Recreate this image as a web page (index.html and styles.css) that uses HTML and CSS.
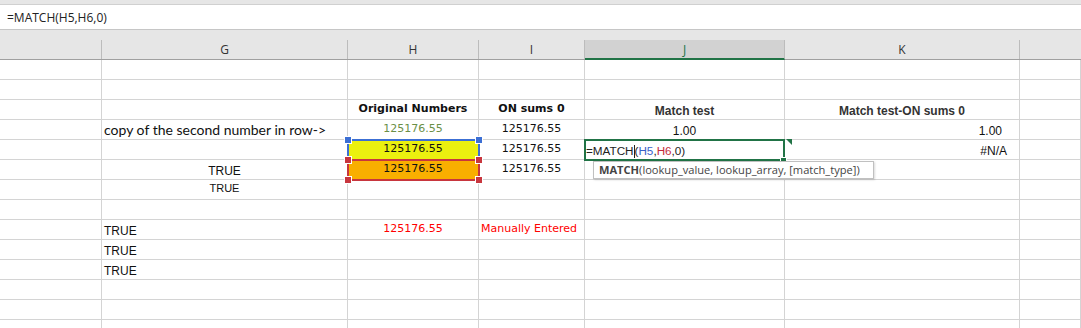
FILE: index.html
```html
<!DOCTYPE html>
<html>
<head>
<meta charset="utf-8">
<link rel="stylesheet" href="styles.css">
</head>
<body>
<div class="topstrip"></div>
<div class="fbar"><span class="ftext">=MATCH(H5,H6,0)</span></div>
<div class="hdr">
  <div class="hc"></div>
  <div class="hc">G</div>
  <div class="hc">H</div>
  <div class="hc">I</div>
  <div class="hc sel">J</div>
  <div class="hc">K</div>
  <div class="hc last"></div>
</div>
<div class="body">
  <div class="grid">
    <!-- row 1 -->
    <div class="c"></div><div class="c"></div><div class="c"></div><div class="c"></div><div class="c"></div><div class="c"></div><div class="c"></div>
    <!-- row 2 -->
    <div class="c"></div><div class="c"></div><div class="c"></div><div class="c"></div><div class="c"></div><div class="c"></div><div class="c"></div>
    <!-- row 3 -->
    <div class="c"></div><div class="c"></div>
    <div class="c ctr v vb">Original Numbers</div>
    <div class="c ctr v vb">ON sums 0</div>
    <div class="c ctr a ab">Match test</div>
    <div class="c ctr a ab">Match test-ON sums 0</div>
    <div class="c"></div>
    <!-- row 4 -->
    <div class="c"></div>
    <div class="c left cal">copy of the second number in row-&gt;</div>
    <div class="c ctr v green">125176.55</div>
    <div class="c ctr v">125176.55</div>
    <div class="c ctr a">1.00</div>
    <div class="c right a pr17">1.00</div>
    <div class="c"></div>
    <!-- row 5 -->
    <div class="c"></div>
    <div class="c"></div>
    <div class="c ctr v yellow">125176.55</div>
    <div class="c ctr v">125176.55</div>
    <div class="c left a edit">=MATCH<span class="caret"></span>(<span class="rb">H5</span>,<span class="rr">H6</span>,0)</div>
    <div class="c right a pr12">#N/A</div>
    <div class="c"></div>
    <!-- row 6 -->
    <div class="c"></div>
    <div class="c ctr a">TRUE</div>
    <div class="c ctr v orange">125176.55</div>
    <div class="c ctr v">125176.55</div>
    <div class="c"></div><div class="c"></div><div class="c"></div>
    <!-- row 7 -->
    <div class="c"></div>
    <div class="c ctr a a11">TRUE</div>
    <div class="c"></div><div class="c"></div><div class="c"></div><div class="c"></div><div class="c"></div>
    <!-- row 8 -->
    <div class="c"></div><div class="c"></div><div class="c"></div><div class="c"></div><div class="c"></div><div class="c"></div><div class="c"></div>
    <!-- row 9 -->
    <div class="c"></div>
    <div class="c left a">TRUE</div>
    <div class="c ctr v red">125176.55</div>
    <div class="c left v red">Manually Entered</div>
    <div class="c"></div><div class="c"></div><div class="c"></div>
    <!-- row 10 -->
    <div class="c"></div>
    <div class="c left a">TRUE</div>
    <div class="c"></div><div class="c"></div><div class="c"></div><div class="c"></div><div class="c"></div>
    <!-- row 11 -->
    <div class="c"></div>
    <div class="c left a">TRUE</div>
    <div class="c"></div><div class="c"></div><div class="c"></div><div class="c"></div><div class="c"></div>
    <!-- row 12 -->
    <div class="c"></div><div class="c"></div><div class="c"></div><div class="c"></div><div class="c"></div><div class="c"></div><div class="c"></div>
    <!-- row 13 -->
    <div class="c"></div><div class="c"></div><div class="c"></div><div class="c"></div><div class="c"></div><div class="c"></div><div class="c"></div>
    <!-- row 14 -->
    <div class="c"></div><div class="c"></div><div class="c"></div><div class="c"></div><div class="c"></div><div class="c"></div><div class="c"></div>
  </div>
  <div class="refbox blue"></div>
  <div class="refbox redbox"></div>
  <div class="handle hb h1"></div>
  <div class="handle hb h2"></div>
  <div class="handle hr h3"></div>
  <div class="handle hr h4"></div>
  <div class="handle hr h5"></div>
  <div class="handle hr h6"></div>
  <div class="editbox"></div>
  <div class="etri"></div>
  <div class="ehandle"></div>
  <div class="tip"><b>MATCH</b>(lookup_value, lookup_array, [match_type])</div>
</div>
</body>
</html>
```

FILE: styles.css
```css
* { box-sizing: border-box; }
html, body { margin: 0; padding: 0; }
body {
  width: 1081px;
  height: 328px;
  overflow: hidden;
  background: #ffffff;
  font-family: "Liberation Sans", Arial, sans-serif;
}
.topstrip {
  height: 5px;
  background: #e6e6e6;
  border-bottom: 1px solid #d0d0d0;
}
.fbar {
  height: 25px;
  background: #ffffff;
  border-bottom: 1px solid #c6c6c6;
  display: flex;
  align-items: center;
  padding-left: 7px;
}
.ftext {
  font-family: "Open Sans", sans-serif;
  font-size: 12px;
  color: #222;
}
.hdr {
  height: 30px;
  background: #e6e6e6;
  border-bottom: 1px solid #a0a0a0;
  display: grid;
  grid-template-columns: 102px 246px 131px 106px 200px 235px 1fr;
}
.hc {
  margin-top: 10px;
  border-right: 1px solid #bcbcbc;
  display: flex;
  align-items: center;
  justify-content: center;
  font-family: "Open Sans", sans-serif;
  font-size: 12px;
  color: #333;
  padding-bottom: 1px;
}
.hc.last { border-right: none; }
.hc.sel {
  background: #d2d2d2;
  color: #217346;
  border-bottom: 2px solid #217346;
  margin-bottom: -1px;
  padding-bottom: 0;
}
.body { position: relative; }
.grid {
  display: grid;
  grid-template-columns: 102px 246px 131px 106px 200px 235px 1fr;
  grid-auto-rows: 20px;
}
.c {
  border-right: 1px solid #d4d4d4;
  border-bottom: 1px solid #d4d4d4;
  display: flex;
  align-items: flex-end;
  white-space: nowrap;
  overflow: visible;
  color: #111;
  padding: 0 2px 1px 2px;
}
.ctr { justify-content: center; }
.left { justify-content: flex-start; }
.right { justify-content: flex-end; }
.v { font-family: "DejaVu Sans", Verdana, sans-serif; font-size: 11px; line-height: 13px; padding-bottom: 4px; }
.vb { font-weight: bold; }
.a { font-family: "Liberation Sans", Arial, sans-serif; font-size: 12px; line-height: 14px; padding-bottom: 1px; }
.ab { font-weight: bold; color: #333; }
.a11 { font-size: 11px; padding-bottom: 4px; }
.cal { font-family: Lato, sans-serif; font-size: 14px; line-height: 16px; padding-left: 2px; padding-bottom: 1px; }
.green { color: #6b8f47; }
.red { color: #ff0000; }
.yellow { background: #ebf00f; }
.orange { background: #f9af00; }
.pr17 { padding-right: 17px; }
.pr12 { padding-right: 12px; }
.edit { font-size: 11.7px; padding-left: 1px; color: #222; overflow: visible; }
.rb { color: #3a62c8; }
.rr { color: #c42b3a; }
.caret {
  display: inline-block;
  width: 1px;
  height: 13px;
  background: #222;
  vertical-align: -2px;
}
.refbox {
  position: absolute;
  left: 347px;
  width: 133px;
  height: 22px;
  border: 2px solid;
}
.refbox.blue { top: 79px; border-color: #3c6fd4; }
.refbox.redbox { top: 99px; border-color: #c8363e; }
.handle {
  position: absolute;
  width: 6px;
  height: 6px;
  box-shadow: 0 0 0 1px #ffffff;
}
.hb { background: #3c6fd4; }
.hr { background: #c8363e; }
.h1 { left: 345px; top: 77px; }
.h2 { left: 476px; top: 77px; }
.h3 { left: 345px; top: 97px; }
.h4 { left: 476px; top: 97px; }
.h5 { left: 345px; top: 117px; }
.h6 { left: 476px; top: 117px; }
.editbox {
  position: absolute;
  left: 584px;
  top: 79px;
  width: 201px;
  height: 22px;
  border: 2px solid #217346;
}
.etri {
  position: absolute;
  left: 786px;
  top: 79px;
  width: 0;
  height: 0;
  border-top: 6px solid #217346;
  border-left: 6px solid transparent;
}
.ehandle {
  position: absolute;
  left: 781px;
  top: 98px;
  width: 5px;
  height: 5px;
  background: #217346;
  box-shadow: 0 0 0 1px #ffffff;
}
.tip {
  position: absolute;
  left: 593px;
  top: 101px;
  width: 281px;
  height: 18px;
  border: 1px solid #c0c0c0;
  background: #ffffff;
  box-shadow: 1px 1px 2px rgba(0,0,0,0.15);
  font-family: "Open Sans", sans-serif;
  font-size: 11.1px;
  line-height: 16px;
  color: #444;
  padding-left: 5px;
  white-space: nowrap;
}
.tip b { font-weight: bold; color: #444; }
```
